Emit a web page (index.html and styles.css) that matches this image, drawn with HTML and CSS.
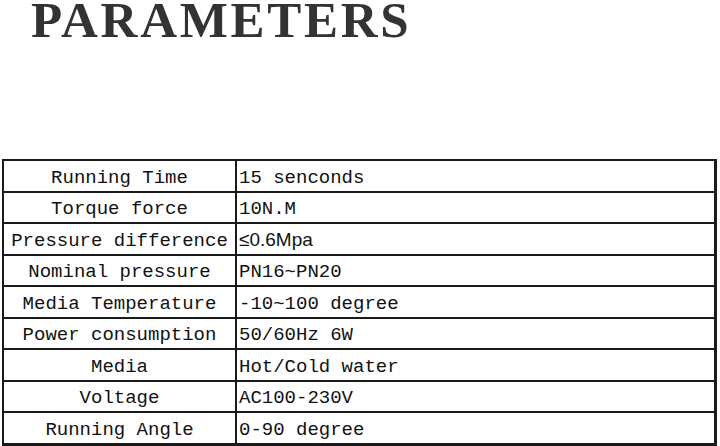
FILE: index.html
```html
<!DOCTYPE html>
<html>
<head>
<meta charset="utf-8">
<link rel="stylesheet" href="styles.css">
</head>
<body>
<h1 class="title">PARAMETERS</h1>
<table class="params">
  <tr><td class="k">Running Time</td><td class="v">15 senconds</td></tr>
  <tr><td class="k">Torque force</td><td class="v">10N.M</td></tr>
  <tr><td class="k">Pressure difference</td><td class="v"><span class="sans">≤0.6Mpa</span></td></tr>
  <tr><td class="k">Nominal pressure</td><td class="v">PN16~PN20</td></tr>
  <tr><td class="k">Media Temperature</td><td class="v">-10~100 degree</td></tr>
  <tr><td class="k">Power consumption</td><td class="v">50/60Hz 6W</td></tr>
  <tr><td class="k">Media</td><td class="v">Hot/Cold water</td></tr>
  <tr><td class="k">Voltage</td><td class="v">AC100-230V</td></tr>
  <tr><td class="k">Running Angle</td><td class="v">0-90 degree</td></tr>
</table>
</body>
</html>
```
FILE: styles.css
```css
html, body {
  margin: 0;
  padding: 0;
  background: #fff;
}
body {
  width: 720px;
  height: 446px;
  overflow: hidden;
}
.title {
  margin: 0 0 119px 31px;
  font-family: "Liberation Serif", "Times New Roman", serif;
  font-weight: bold;
  font-size: 51px;
  line-height: 40px;
  letter-spacing: 2.7px;
  color: #333;
}
.params {
  border-collapse: collapse;
  margin-left: 2px;
  width: 715px;
  font-family: "Liberation Mono", "Courier New", monospace;
  font-size: 19px;
  color: #111;
  border-right: 3px solid #1a1a1a;
  border-bottom: 3px solid #1a1a1a;
}
.params td {
  border: 2px solid #1a1a1a;
  height: 25.5px;
  padding: 4px 0 0 0;
  line-height: 20px;
  vertical-align: middle;
}
.params tr:last-child td { border-bottom-width: 3px; }
.params td:last-child { border-right-width: 3px; }
.k {
  width: 231px;
  text-align: center;
  white-space: nowrap;
}
.v {
  text-align: left;
  padding-left: 2px !important;
}
.sans {
  font-family: "Liberation Sans", Arial, sans-serif;
  font-size: 19px;
}
```
